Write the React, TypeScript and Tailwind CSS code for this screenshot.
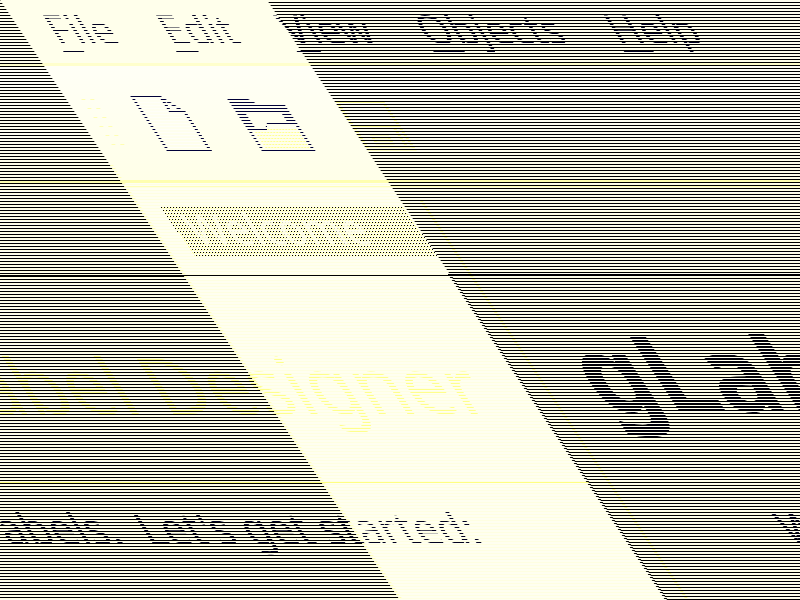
import React from "react";

// Scan-line masks: one visible pixel row out of every three.
const rowsA = "[mask-image:repeating-linear-gradient(to_bottom,#000_0_1px,transparent_1px_3px)]";
const rowsB = "[mask-image:repeating-linear-gradient(to_bottom,transparent_0_1px,#000_1px_2px,transparent_2px_3px)]";
const rowsC = "[mask-image:repeating-linear-gradient(to_bottom,transparent_0_2px,#000_2px_3px)]";

const menus = ["File", "Edit", "View", "Objects", "Help"];

function MenuBar() {
  return (
    <nav className={`flex h-[63px] gap-[49px] pl-[429px] text-[40px] leading-[54px] text-[#000020] ${rowsA}`}>
      {menus.map((name) => (
        <button key={name} className="block h-[57px] leading-[54px]">
          <span className="underline decoration-[3px] underline-offset-[7px]">{name[0]}</span>
          {name.slice(1)}
        </button>
      ))}
    </nav>
  );
}

function Toolbar() {
  return (
    <div className="h-[114px] bg-linear-to-b from-[#fffff6] to-[#ffffe8]">
      <div className={`flex h-full pl-[415px] ${rowsA}`}>
        <svg className="mt-[30px] mr-[36px] h-[54px] w-[15px]" viewBox="0 0 15 54" aria-hidden="true">
          <path d="M0 4.500H4M9 4.500H13M0 13.500H4M9 13.500H13M0 22.500H4M9 22.500H13M0 31.500H4M9 31.500H13M0 40.500H4M9 40.500H13M0 49.500H4M9 49.500H13" stroke="#ffffb4" strokeWidth="3" />
        </svg>
        <button aria-label="New" className="mt-[30px] mr-[49px] h-[57px] w-[46px]">
          <svg width="46" height="57" viewBox="0 0 46 57" fill="none" stroke="#000038" strokeWidth="3">
            <path d="M1.500 1.500H30L44 16.500V55.500H1.500Z" fill="#fffff8" />
            <path d="M30 1.500V16.500H45" />
          </svg>
        </button>
        <button aria-label="Open" className="mt-[30px] mr-[51px] h-[57px] w-[55px]">
          <svg width="55" height="57" viewBox="0 0 55 57">
            <path d="M0 3H21L27 8H54V57H0Z" fill="#000038" />
            <path d="M9 18H45V27H24L18 33H9Z" fill="#fffff0" />
            <path d="M22 30H51V54H3V36H18Z" fill="#fffff0" />
            <path d="M20 33.500H50M6 36.500H50M6 39.500H50M6 42.500H50M6 45.500H50M6 48.500H50M6 51.500H50" stroke="#ffff90" strokeWidth="3" strokeDasharray="2 1" />
          </svg>
        </button>
        <button aria-label="Save" className="mt-[33px] h-[54px] w-[54px]">
          <svg width="54" height="54" viewBox="0 0 54 54" fill="none" stroke="#ffff98" strokeWidth="3">
            <path d="M2 4H48V50H2ZM2 28H48M14 38H30V44H14ZM42 28V48" />
          </svg>
        </button>
      </div>
    </div>
  );
}

function Welcome() {
  return (
    <section className="h-[96px] pt-[24px] pl-[423px]">
      <h1 className="relative z-10 h-[51px] pl-[12px] text-[41px] leading-[48px] text-[#fffff0]/90">Welcome</h1>
    </section>
  );
}

function Intro() {
  return (
    <main className="text-[#000020]">
      <div className="flex h-[206px] whitespace-nowrap">
        <p className={`mt-[18px] h-[180px] w-[660px] shrink-0 pl-[73px] text-[78px] leading-[180px] text-[#ffff8c] ${rowsC}`}>
          Label Designer
        </p>
        <p className={`mt-[6px] h-[186px] pl-[70px] text-[105px] leading-[180px] font-bold text-[#000010] ${rowsB}`}>
          gLabels
        </p>
      </div>
      <div className="h-px bg-[#ffff80]" />
      <div className="flex pt-[15px] text-[43px] leading-[60px] whitespace-nowrap">
        <p className={`w-[786px] shrink-0 pl-[46px] ${rowsC}`}>abels.&nbsp; Let's get started:</p>
        <p className={`pl-[42px] ${rowsB}`}>Welcome</p>
      </div>
    </main>
  );
}

// A texture of single dots stepping two pixels right on each inked row.
function DotTexture() {
  return (
    <svg className="absolute top-[207px] left-[161px] h-[49px] w-[277px]" shapeRendering="crispEdges" aria-hidden="true">
      <defs>
        <pattern id="dots" width="3" height="9" patternUnits="userSpaceOnUse">
          <path d="M0 0h1v1h-1zM2 3h1v1h-1zM1 6h1v1h-1z" fill="#000" />
          <path d="M1 0h1v1h-1zM0 3h1v1h-1zM2 6h1v1h-1z" fill="#ffff99" />
          <path d="M2 1h1v1h-1zM1 4h1v1h-1zM0 7h1v1h-1z" fill="#ffffb0" />
        </pattern>
      </defs>
      <path d="M0 0H243L276 49H33Z" fill="url(#dots)" />
    </svg>
  );
}

export default function App() {
  return (
    <div className="relative h-screen overflow-hidden bg-[#fffff0] font-['Noto_Sans',sans-serif]">
      <DotTexture />
      <div className="-ml-[400px] w-[calc(100%+400px)] origin-top-left transform-[skewX(33.69deg)]">
        <div className="bg-[#ffffeb]">
          <MenuBar />
        </div>
        <div className="h-[3px] bg-[#ffffcc]" />
        <Toolbar />
        <div className="h-[3px] bg-[#ffffb0]" />
        <div className="h-[3px]" />
        <div className="h-[1px] bg-[#ffffb8]" />
        <div className="-mt-[7px]">
          <Welcome />
        </div>
        <Intro />
      </div>
      <div className="pointer-events-none absolute inset-0 bg-[repeating-linear-gradient(to_bottom,transparent_0_1px,#ffffe4_1px_2px,transparent_2px_3px)] opacity-60 [clip-path:polygon(0_183px,100%_183px,100%_100%,0_100%)] mix-blend-multiply" />
      <div className="pointer-events-none absolute inset-0 bg-[repeating-linear-gradient(to_bottom,#000_0_1px,transparent_1px_3px)] [clip-path:polygon(0_0,400px_600px,0_600px)]" />
      <div className="pointer-events-none absolute inset-0 bg-[repeating-linear-gradient(to_bottom,transparent_0_2px,#000_2px_3px)] [clip-path:polygon(267px_0,100%_0,100%_600px,667px_600px)]" />
      <div className="pointer-events-none absolute inset-0 bg-[repeating-linear-gradient(to_bottom,transparent_0_1px,#000_1px_2px,transparent_2px_3px)] [clip-path:polygon(449px_276px,452px_276px,668px_600px,665px_600px)]" />
      <div className="pointer-events-none absolute inset-0 bg-[repeating-linear-gradient(to_bottom,#ffffb8_0_1px,transparent_1px_3px)] [clip-path:polygon(110px_165px,113px_165px,403px_600px,400px_600px)]" />
      <div className="pointer-events-none absolute inset-0 bg-[repeating-linear-gradient(to_bottom,#ffff99_0_1px,transparent_1px_3px)] [clip-path:polygon(420px_201px,423px_201px,689px_600px,686px_600px)]" />
      <div className="pointer-events-none absolute inset-x-0 top-[275px] h-px bg-black" />
      <div className="pointer-events-none absolute top-[274px] right-0 left-[448px] h-px bg-black" />
    </div>
  );
}
